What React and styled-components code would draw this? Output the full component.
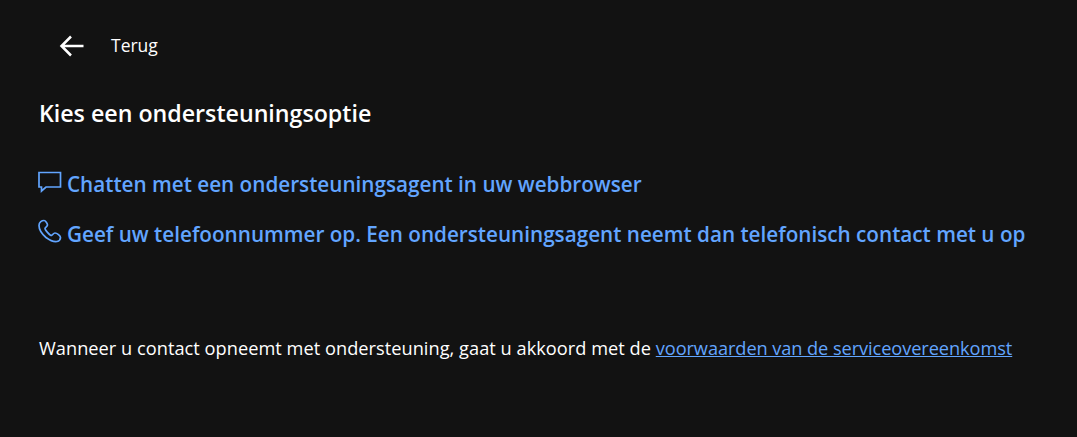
import React from "react";
import styled, { createGlobalStyle } from "styled-components";

const Global = createGlobalStyle`
  html, body { margin: 0; padding: 0; background: #121212; }
`;
const Page = styled.div`
  width: 1077px; height: 437px; background: #121212; color: #fff; box-sizing: border-box;
  font-family: "Open Sans", "Noto Sans", sans-serif; padding: 30px 0 0 39px; overflow: hidden;
`;
const Back = styled.div`
  display: flex; align-items: center; height: 30px; padding-left: 20px; font-size: 17.5px;
`;
const BackLabel = styled.span` margin-left: 27px; `;
const Title = styled.h1`
  margin: 37px 0 0; font-size: 23.2px; line-height: 32px; font-weight: 600;
`;
const Options = styled.div`
  margin-top: 39px; display: flex; flex-direction: column; gap: 19px;
`;
const Option = styled.a`
  display: flex; align-items: center; height: 31px; gap: 5px; margin-left: -1px;
  color: #62a5ff; font-size: 20.7px; font-weight: 600; white-space: nowrap;
`;
const Icon = styled.svg`
  width: 24px; height: 24px; flex: none; margin-top: -6px; fill: none; stroke: #62a5ff; stroke-width: 1.7;
`;
const Terms = styled.p`
  margin: 87px 0 0; font-size: 18.2px; line-height: 24px; white-space: nowrap; letter-spacing: 0.035px;
`;
const TermsLink = styled.a`
  color: #62a5ff; text-decoration: underline; letter-spacing: -0.07px;
`;

export default function App() {
  return (
    <Page>
      <Global />
      <Back>
        <svg width="25" height="24" viewBox="0 0 25 24" fill="none" stroke="#fff" strokeWidth="2.5">
          <path d="M2.500 13h22M12 3.500 2.500 13l9.500 9.500" />
        </svg>
        <BackLabel>Terug</BackLabel>
      </Back>
      <Title>Kies een ondersteuningsoptie</Title>
      <Options>
        <Option>
          <Icon viewBox="0 0 24 24"><path d="M1 3.500h21.500v14.500H8L3.500 22v-4H1z" /></Icon>
          Chatten met een ondersteuningsagent in uw webbrowser
        </Option>
        <Option>
          <Icon viewBox="0 0 24 24"><path d="M6 1.500C4 1.500 1 3 1 6.500 1 10 4 15 8 18.500c4 3 8 4.500 11 4 2-.5 3.500-2.500 3.500-4 0-1.500-3.500-4.500-5.500-4.500-1.500 0-2.500 2-3.500 2.500C12 16.500 7 11 7 9.500c0-1 2.500-2 2.500-3.500S7.500 1.500 6 1.500z" /></Icon>
          Geef uw telefoonnummer op. Een ondersteuningsagent neemt dan telefonisch contact met u op
        </Option>
      </Options>
      <Terms>
        Wanneer u contact opneemt met ondersteuning, gaat u akkoord met de <TermsLink>voorwaarden van de serviceovereenkomst</TermsLink>
      </Terms>
    </Page>
  );
}
